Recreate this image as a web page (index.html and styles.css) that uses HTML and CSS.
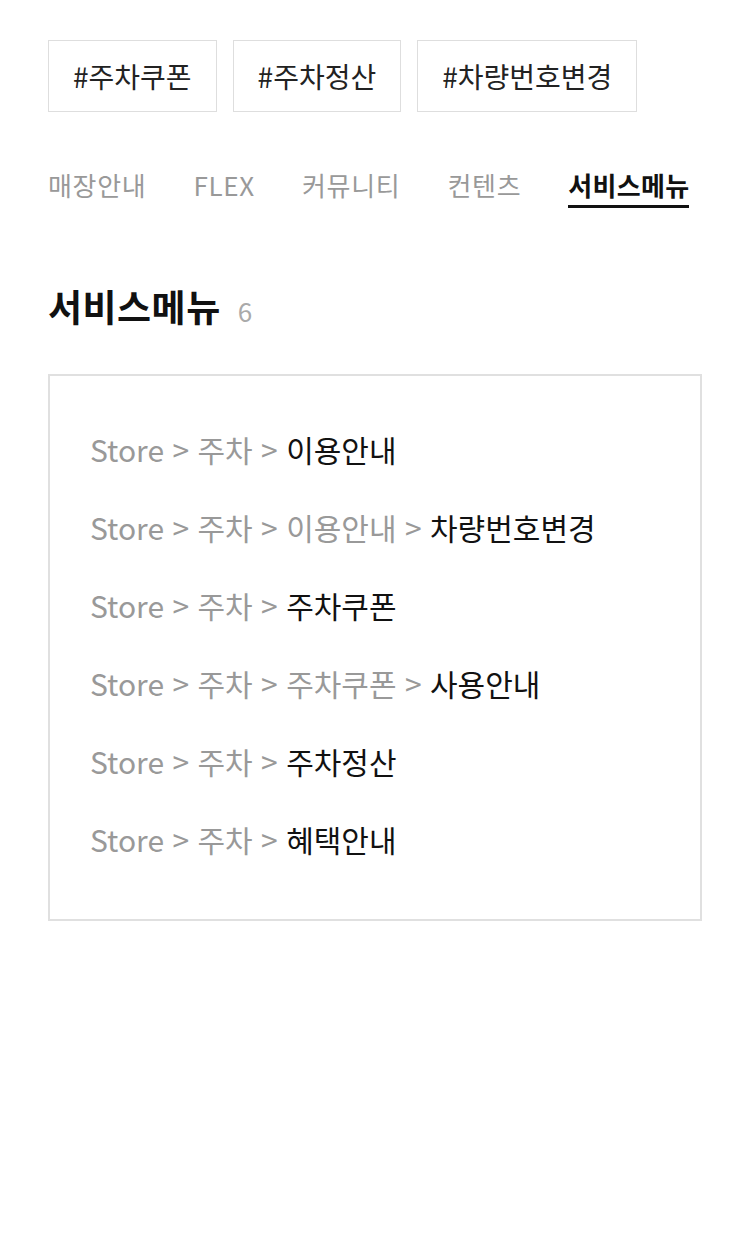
FILE: index.html
```html
<!DOCTYPE html>
<html lang="ko">
<head>
<meta charset="utf-8">
<link rel="stylesheet" href="styles.css">
</head>
<body>
<div class="page">
  <div class="tags">
    <a class="tag">#주차쿠폰</a>
    <a class="tag">#주차정산</a>
    <a class="tag">#차량번호변경</a>
  </div>
  <nav class="tabs">
    <span class="tab">매장안내</span>
    <span class="tab">FLEX</span>
    <span class="tab">커뮤니티</span>
    <span class="tab">컨텐츠</span>
    <span class="tab active">서비스메뉴</span>
  </nav>
  <h2 class="title">서비스메뉴<span class="count">6</span></h2>
  <ul class="results">
    <li>Store &gt; 주차 &gt; <b>이용안내</b></li>
    <li>Store &gt; 주차 &gt; 이용안내 &gt; <b>차량번호변경</b></li>
    <li>Store &gt; 주차 &gt; <b>주차쿠폰</b></li>
    <li>Store &gt; 주차 &gt; 주차쿠폰 &gt; <b>사용안내</b></li>
    <li>Store &gt; 주차 &gt; <b>주차정산</b></li>
    <li>Store &gt; 주차 &gt; <b>혜택안내</b></li>
  </ul>
</div>
</body>
</html>
```
FILE: styles.css
```css
* { box-sizing: border-box; }
body {
  margin: 0;
  background: #fff;
  font-family: "Noto Sans CJK KR", "Noto Sans", sans-serif;
  color: #111;
}
.page { padding: 40px 48px; }
.tags { display: flex; gap: 16px; }
.tag {
  display: flex;
  align-items: center;
  height: 72px;
  padding: 0 24px;
  border: 1px solid #dedede;
  font-size: 28px;
  color: #222;
}
.tabs {
  display: flex;
  gap: 47px;
  margin-top: 54px;
}
.tab {
  font-size: 26px;
  letter-spacing: 0.7px;
  line-height: 38px;
  color: #999;
  padding-bottom: 1px;
}
.tab.active {
  color: #111;
  font-weight: 700;
  letter-spacing: 0.3px;
  border-bottom: 3px solid #111;
}
.title {
  margin: 71px 0 0;
  font-size: 37px;
  letter-spacing: 0.5px;
  font-weight: 700;
  line-height: 54px;
  display: flex;
  align-items: baseline;
}
.count {
  font-size: 26px;
  font-weight: 400;
  letter-spacing: 0;
  color: #aaa;
  margin-left: 17px;
}
.results {
  list-style: none;
  margin: 36px 0 0;
  padding: 34px 40px 41px;
  border: 2px solid #e0e0e0;
}
.results li {
  font-size: 30px;
  line-height: 78px;
  color: #999;
  white-space: nowrap;
}
.results b { font-weight: 400; color: #111; }
```
